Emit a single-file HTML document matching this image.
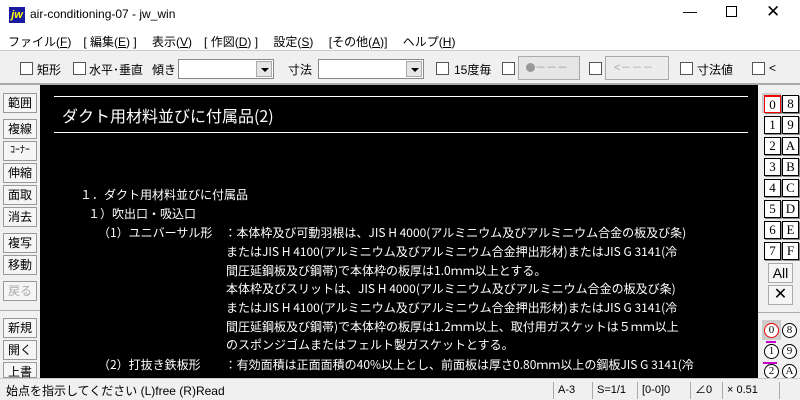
<!DOCTYPE html>
<html><head><meta charset="utf-8"><style>
*{margin:0;padding:0;box-sizing:border-box}
body{width:800px;height:400px;overflow:hidden;background:#f0f0f0;font-family:"Liberation Sans","Noto Sans CJK JP",sans-serif;font-size:12px;color:#000;position:relative}
.a{position:absolute;white-space:nowrap}
#title{left:0;top:0;width:800px;height:30px;background:#fff}
#menu{left:0;top:30px;width:800px;height:20px;background:#fff}
.cb{position:absolute;width:13px;height:13px;border:1px solid #555;background:#fff}
.dd{position:absolute;height:20px;border:1px solid #888;background:#fff}
.dd i{position:absolute;right:1px;top:1px;width:16px;height:16px;background:#e6e6e6;border:1px solid #aaa}
.dd i:after{content:"";position:absolute;left:4px;top:6px;border-left:4px solid transparent;border-right:4px solid transparent;border-top:4px solid #000}
#canvas{left:40px;top:85px;width:718px;height:293px;background:#000;color:#fff;font-family:"Noto Sans CJK JP",sans-serif}
.lb{position:absolute;left:3px;width:34px;height:20px;border:1px solid #999;background:#f5f5f5;font-size:12px;text-align:center;line-height:18px}
.rb{position:absolute;width:17px;height:18px;border:1px solid #000;background:#fff;font-family:"Liberation Serif",serif;font-size:13px;text-align:center;line-height:16px;box-shadow:1px 1px 0 #888}
.cc{position:absolute;width:15px;height:15px;border:1px solid #000;border-radius:50%;font-family:"Liberation Serif",serif;font-size:11px;text-align:center;line-height:13px;background:#fff}
#status{left:0;top:378px;width:800px;height:22px;background:#f0f0f0;border-top:1px solid #ccc}
.sp{position:absolute;top:3px;height:17px;border-left:1px solid #aaa;font-size:11px;line-height:17px;padding-left:4px}
</style></head><body>
<div id="title" class="a">
 <div class="a" style="left:9px;top:7px;width:16px;height:16px;background:#1a1aa0;color:#ff0;font-weight:bold;font-style:italic;font-size:11px;line-height:16px;text-align:center">jw</div>
 <div class="a" style="left:30px;top:7px;font-size:12px">air-conditioning-07 - jw_win</div>
 <div class="a" style="left:683px;top:3px;font-size:14px">—</div>
 <div class="a" style="left:726px;top:6px;width:11px;height:11px;border:1px solid #000"></div>
 <div class="a" style="left:766px;top:2px;font-size:17px">✕</div>
</div>
<div id="menu" class="a">
 <div class="a" style="left:8px;top:3px">ファイル(<u>F</u>)　[ 編集(<u>E</u>) ]　 表示(<u>V</u>)　[ 作図(<u>D</u>) ]　 設定(<u>S</u>)　 [その他(<u>A</u>)]　 ヘルプ(<u>H</u>)</div>
</div>
<div class="a" style="left:0;top:50px;width:800px;height:1px;background:#ccc"></div>
<div class="cb" style="left:20px;top:62px"></div><div class="a" style="left:37px;top:61px">矩形</div>
<div class="cb" style="left:73px;top:62px"></div><div class="a" style="left:89px;top:61px">水平･垂直</div>
<div class="a" style="left:152px;top:61px">傾き</div>
<div class="dd" style="left:178px;top:59px;width:96px"><i></i></div>
<div class="a" style="left:288px;top:61px">寸法</div>
<div class="dd" style="left:318px;top:59px;width:106px"><i></i></div>
<div class="cb" style="left:436px;top:62px"></div><div class="a" style="left:454px;top:61px">15度毎</div>
<div class="cb" style="left:502px;top:62px"></div>
<div class="a" style="left:518px;top:56px;width:62px;height:24px;border:1px solid #aaa;background:#e6e6e6;color:#999;font-size:11px;line-height:22px;padding-left:7px"><span style="display:inline-block;width:9px;height:9px;border-radius:50%;background:#999;vertical-align:-1px"></span>－－－</div>
<div class="cb" style="left:589px;top:62px"></div>
<div class="a" style="left:605px;top:56px;width:64px;height:24px;border:1px solid #aaa;background:#ececec;color:#aaa;font-size:11px;line-height:22px;padding-left:8px">&lt;－－－</div>
<div class="cb" style="left:680px;top:62px"></div><div class="a" style="left:697px;top:61px">寸法値</div>
<div class="cb" style="left:752px;top:62px"></div><div class="a" style="left:769px;top:61px">&lt;</div>
<div class="a" style="left:0;top:83px;width:800px;height:2px;background:#aaa"></div>

<div class="lb" style="top:93px">範囲</div>
<div class="lb" style="top:119px">複線</div>
<div class="lb" style="top:141px;font-size:10px">ｺｰﾅｰ</div>
<div class="lb" style="top:163px">伸縮</div>
<div class="lb" style="top:185px">面取</div>
<div class="lb" style="top:207px">消去</div>
<div class="lb" style="top:233px">複写</div>
<div class="lb" style="top:255px">移動</div>
<div class="lb" style="top:281px;color:#aaa">戻る</div>
<div class="a" style="left:0;top:310px;width:40px;height:1px;background:#aaa"></div>
<div class="lb" style="top:318px">新規</div>
<div class="lb" style="top:340px">開く</div>
<div class="lb" style="top:362px;height:16px">上書</div>

<div id="canvas" class="a">
 <div class="a" style="left:14px;top:11px;width:694px;height:1px;background:#fff"></div>
 <div class="a" style="left:22px;top:18px;font-size:16px">ダクト用材料並びに付属品(2)</div>
 <div class="a" style="left:14px;top:47px;width:694px;height:1px;background:#fff"></div>
 <div style="font-size:12px;line-height:19px">
 <div class="a" style="left:40px;top:100px">１．ダクト用材料並びに付属品</div>
 <div class="a" style="left:48px;top:119px">１）吹出口・吸込口</div>
 <div class="a" style="left:58px;top:138px">（1）ユニバーサル形　：本体枠及び可動羽根は、JIS H 4000(アルミニウム及びアルミニウム合金の板及び条)</div>
 <div class="a" style="left:186px;top:157px">またはJIS H 4100(アルミニウム及びアルミニウム合金押出形材)またはJIS G 3141(冷</div>
 <div class="a" style="left:186px;top:176px">間圧延鋼板及び鋼帯)で本体枠の板厚は1.0ｍｍ以上とする。</div>
 <div class="a" style="left:186px;top:194px">本体枠及びスリットは、JIS H 4000(アルミニウム及びアルミニウム合金の板及び条)</div>
 <div class="a" style="left:186px;top:213px">またはJIS H 4100(アルミニウム及びアルミニウム合金押出形材)またはJIS G 3141(冷</div>
 <div class="a" style="left:186px;top:232px">間圧延鋼板及び鋼帯)で本体枠の板厚は1.2ｍｍ以上、取付用ガスケットは５ｍｍ以上</div>
 <div class="a" style="left:186px;top:250px">のスポンジゴムまたはフェルト製ガスケットとする。</div>
 <div class="a" style="left:58px;top:270px">（2）打抜き鉄板形　　：有効面積は正面面積の40%以上とし、前面板は厚さ0.80ｍｍ以上の鋼板JIS G 3141(冷</div>
 </div>
</div>

<div class="a" style="left:762px;top:93px;width:19px;height:20px;background:#ccc"></div>
<div class="rb" style="left:764px;top:95px;border-color:#e00;border-top-width:2px">0</div><div class="rb" style="left:782px;top:95px">8</div>
<div class="rb" style="left:764px;top:116px">1</div><div class="rb" style="left:782px;top:116px">9</div>
<div class="rb" style="left:764px;top:137px">2</div><div class="rb" style="left:782px;top:137px">A</div>
<div class="rb" style="left:764px;top:158px">3</div><div class="rb" style="left:782px;top:158px">B</div>
<div class="rb" style="left:764px;top:179px">4</div><div class="rb" style="left:782px;top:179px">C</div>
<div class="rb" style="left:764px;top:200px">5</div><div class="rb" style="left:782px;top:200px">D</div>
<div class="rb" style="left:764px;top:221px">6</div><div class="rb" style="left:782px;top:221px">E</div>
<div class="rb" style="left:764px;top:242px">7</div><div class="rb" style="left:782px;top:242px">F</div>
<div class="a" style="left:768px;top:263px;width:25px;height:20px;border:1px solid #aaa;background:#f5f5f5;font-size:14px;text-align:center;line-height:18px">All</div>
<div class="a" style="left:768px;top:285px;width:25px;height:20px;border:1px solid #aaa;background:#f5f5f5;font-size:16px;text-align:center;line-height:18px">✕</div>
<div class="a" style="left:758px;top:312px;width:42px;height:1px;background:#aaa"></div>
<div class="a" style="left:762px;top:320px;width:19px;height:20px;background:#ccc"></div>
<div class="cc" style="left:764px;top:323px;border-color:#e00">0</div>
<div class="cc" style="left:782px;top:323px">8</div>
<div class="cc" style="left:764px;top:344px">1</div><div class="cc" style="left:782px;top:344px">9</div>
<div class="a" style="left:766px;top:341px;width:10px;height:2px;background:#c0c"></div>
<div class="cc" style="left:764px;top:364px">2</div><div class="cc" style="left:782px;top:364px">A</div>
<div class="a" style="left:763px;top:362px;width:14px;height:2px;background:#c0c"></div>

<div id="status" class="a">
 <div class="a" style="left:6px;top:3px;font-size:12px">始点を指示してください (L)free (R)Read</div>
 <div class="sp" style="left:553px;width:39px">A-3</div>
 <div class="sp" style="left:592px;width:45px">S=1/1</div>
 <div class="sp" style="left:637px;width:53px">[0-0]0</div>
 <div class="sp" style="left:690px;width:32px">∠0</div>
 <div class="sp" style="left:722px;width:58px;border-right:1px solid #aaa">× 0.51</div>
</div>
</body></html>
